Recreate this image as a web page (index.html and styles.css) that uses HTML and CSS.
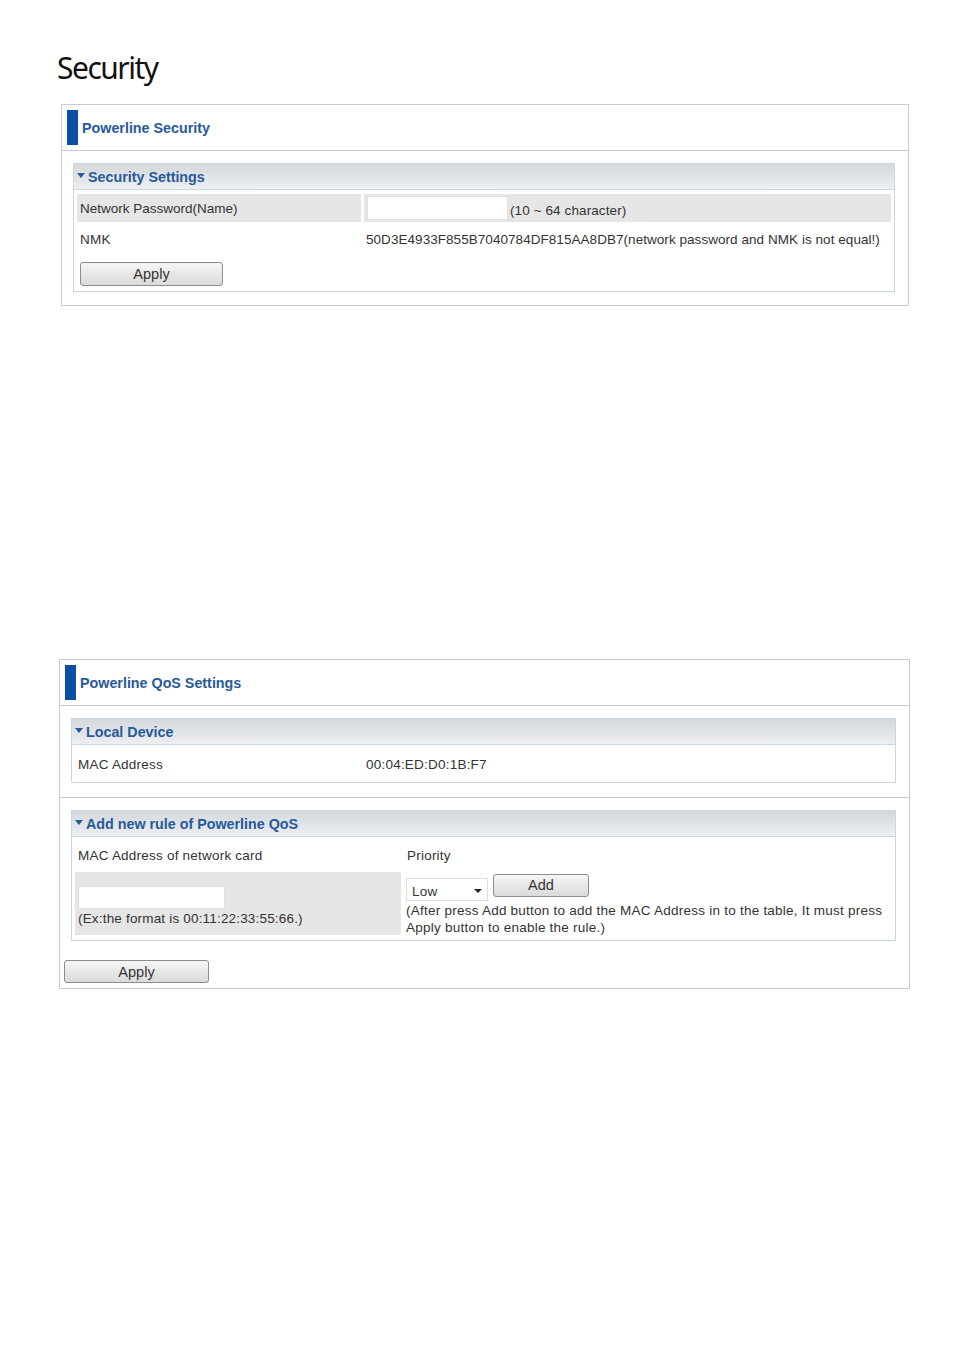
FILE: index.html
```html
<!DOCTYPE html>
<html>
<head>
<meta charset="utf-8">
<title>Security</title>
<link rel="stylesheet" href="styles.css">
</head>
<body>
<h1 class="page-title">Security</h1>

<div class="panel panel-sec">
  <div class="panel-head"><span class="bar"></span><span class="panel-title">Powerline Security</span></div>
  <div class="panel-body">
    <div class="box">
      <div class="box-head"><span class="tri"></span>Security Settings</div>
      <div class="grid grid-sec">
        <div class="cell gray tight">Network Password(Name)</div>
        <div class="cell gray"><span class="field field-pw"></span><span class="note">(10 ~ 64 character)</span></div>
        <div class="cell">NMK</div>
        <div class="cell nmk">50D3E4933F855B7040784DF815AA8DB7(network password and NMK is not equal!)</div>
      </div>
      <div class="btn-row"><span class="btn btn-apply1">Apply</span></div>
    </div>
  </div>
</div>

<div class="panel panel-qos">
  <div class="panel-head"><span class="bar"></span><span class="panel-title">Powerline QoS Settings</span></div>
  <div class="panel-body body-local">
    <div class="box">
      <div class="box-head"><span class="tri"></span>Local Device</div>
      <div class="grid grid-local">
        <div class="cell">MAC Address</div>
        <div class="cell">00:04:ED:D0:1B:F7</div>
      </div>
    </div>
  </div>
  <div class="panel-body body-rule">
    <div class="box">
      <div class="box-head"><span class="tri"></span>Add new rule of Powerline QoS</div>
      <div class="grid grid-rule">
        <div class="cell">MAC Address of network card</div>
        <div class="cell">Priority</div>
        <div class="cell gray mac-cell">
          <span class="field field-mac"></span>
          <span class="hint">(Ex:the format is 00:11:22:33:55:66.)</span>
        </div>
        <div class="cell prio-cell">
          <div class="prio-controls">
            <span class="select">Low<span class="arrow"></span></span>
            <span class="btn btn-add">Add</span>
          </div>
          <div class="help">(After press Add button to add the MAC Address in to the table, It must press Apply button to enable the rule.)</div>
        </div>
      </div>
    </div>
    <div class="btn-row2"><span class="btn btn-apply2">Apply</span></div>
  </div>
</div>
</body>
</html>
```

FILE: styles.css
```css
html, body {
  margin: 0;
  padding: 0;
  background: #ffffff;
}
body {
  font-family: "Liberation Sans", Arial, sans-serif;
  font-size: 13.5px;
  letter-spacing: 0.22px;
  color: #333333;
}
.page-title {
  margin: 0;
  padding: 49px 0 0 57px;
  font-family: "Noto Sans", "Open Sans", sans-serif;
  font-weight: normal;
  font-size: 30px;
  letter-spacing: -1.5px;
  line-height: 38px;
  color: #111111;
  box-sizing: border-box;
  height: 104px;
}
.panel {
  box-sizing: border-box;
  border: 1px solid #cccccc;
  background: #ffffff;
}
.panel-sec {
  margin-left: 61px;
  width: 848px;
  height: 202px;
}
.panel-qos {
  margin-left: 59px;
  margin-top: 353px;
  width: 851px;
  height: 330px;
}
.panel-head {
  height: 45px;
  border-bottom: 1px solid #cccccc;
  display: flex;
  align-items: center;
  padding-left: 5px;
}
.bar {
  width: 11px;
  height: 35px;
  background: #0a4fa6;
  margin-right: 4px;
}
.panel-title {
  font-weight: bold;
  font-size: 14.3px;
  letter-spacing: 0;
  color: #28599a;
  padding-top: 1px;
}
.panel-body {
  padding: 12px 13px 13px 11px;
}
.panel-qos .panel-body {
  padding: 12px 13px 14px 11px;
}
.panel-qos .body-rule {
  border-top: 1px solid #cccccc;
  padding: 12px 13px 0 11px;
}
.box {
  border: 1px solid #c9d5e0;
}
.box-head {
  border-bottom: 1px solid #c9d5e0;
  background: linear-gradient(#d3d8dc, #edeff1);
  font-weight: bold;
  font-size: 14.3px;
  letter-spacing: 0;
  color: #28599a;
  display: flex;
  align-items: center;
  padding-left: 3px;
  padding-top: 1px;
  box-sizing: border-box;
  height: 26px;
}
.tri {
  width: 0;
  height: 0;
  border-left: 4.5px solid transparent;
  border-right: 4.5px solid transparent;
  border-top: 5px solid #28599a;
  margin-right: 3px;
  margin-top: -4px;
}
.grid {
  display: grid;
  column-gap: 3px;
  row-gap: 3px;
  padding: 4px 3px 3px 3px;
}
.grid-sec {
  grid-template-columns: 284px 1fr;
  grid-auto-rows: 28px;
}
.grid-local {
  grid-template-columns: 285px 1fr;
  grid-auto-rows: 28px;
  padding: 5px 3px 4px 3px;
}
.grid-rule {
  grid-template-columns: 326px 1fr;
  grid-template-rows: 28px 63px;
  padding: 4px 3px 5px 3px;
}
.cell {
  display: flex;
  align-items: center;
  padding-left: 3px;
}
.tight {
  letter-spacing: 0;
}
.gray {
  background: #e6e6e6;
}
.field {
  display: inline-block;
  background: #ffffff;
  border: 1px solid #e0e0e0;
  box-sizing: border-box;
}
.field-pw {
  width: 141px;
  height: 24px;
}
.note {
  margin-left: 2px;
  padding-top: 4px;
  letter-spacing: 0.1px;
}
.nmk {
  letter-spacing: 0.05px;
  padding-left: 2px;
}
.btn {
  display: inline-flex;
  align-items: center;
  justify-content: center;
  box-sizing: border-box;
  border: 1px solid #8c8c8c;
  border-radius: 3px;
  background: linear-gradient(#f6f6f6, #dadada);
  color: #333333;
  font-size: 14.5px;
  letter-spacing: 0;
}
.btn-row {
  padding: 6px 0 5px 6px;
}
.btn-apply1 {
  width: 143px;
  height: 24px;
}
.mac-cell {
  flex-direction: column;
  align-items: flex-start;
  justify-content: center;
}
.field-mac {
  width: 147px;
  height: 23px;
  margin-top: 5px;
}
.hint {
  margin-top: 2px;
  letter-spacing: 0.18px;
}
.prio-cell {
  flex-direction: column;
  align-items: flex-start;
  justify-content: flex-start;
  padding-left: 2px;
  padding-top: 2px;
}
.prio-controls {
  display: flex;
  align-items: flex-end;
  gap: 5px;
}
.select {
  position: relative;
  display: inline-block;
  box-sizing: border-box;
  width: 82px;
  height: 23px;
  line-height: 25px;
  border: 1px solid #dedede;
  background: #ffffff;
  padding-left: 5px;
}
.arrow {
  position: absolute;
  right: 5px;
  top: 10px;
  border-left: 4px solid transparent;
  border-right: 4px solid transparent;
  border-top: 4px solid #222222;
}
.btn-add {
  width: 96px;
  height: 23px;
  margin-bottom: 4px;
  padding-bottom: 2px;
}
.help {
  line-height: 17px;
  margin-top: 1px;
  letter-spacing: 0.24px;
}
.btn-row2 {
  padding: 19px 0 0 0;
  margin-left: -7px;
}
.btn-apply2 {
  width: 145px;
  height: 23px;
}
```
